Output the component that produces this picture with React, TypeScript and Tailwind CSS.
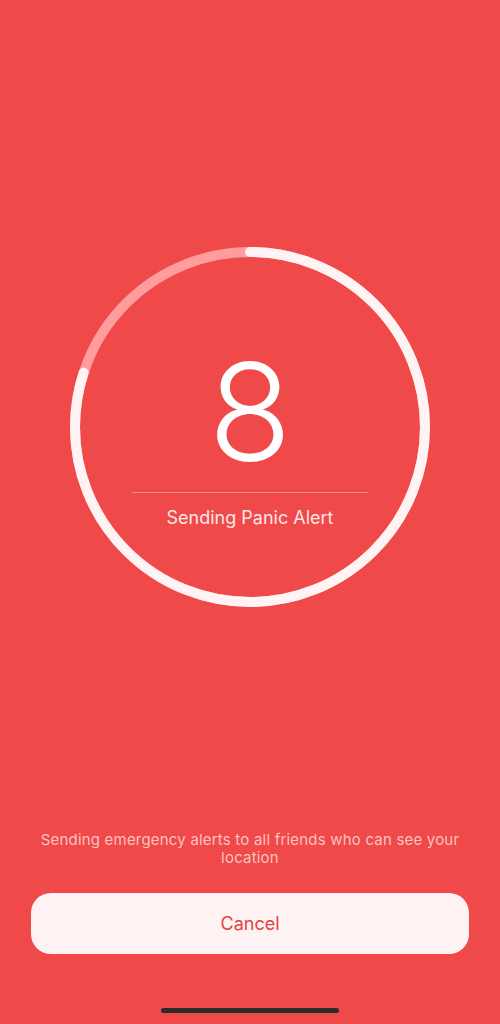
const RADIUS = 175;
const CIRC = 2 * Math.PI * RADIUS;

function CountdownRing({ count, total }: { count: number; total: number }) {
    const progress = count / total;
    return (
        <div className="relative mx-auto h-[360px] w-[360px]">
            <svg className="absolute inset-0" width="360" height="360" viewBox="0 0 360 360">
                <circle cx="180" cy="180" r={RADIUS} fill="none" stroke="#ff9c9c" strokeWidth="10" />
                <circle
                    cx="180"
                    cy="180"
                    r={RADIUS}
                    fill="none"
                    stroke="#fff3f3"
                    strokeWidth="10"
                    strokeLinecap="round"
                    strokeDasharray={`${CIRC * progress} ${CIRC}`}
                    transform="rotate(-90 180 180)"
                />
            </svg>
            <div className="relative flex flex-col items-center pt-[97px]">
                <span className="text-[136px] font-light leading-none text-white">{count}</span>
                <div className="mt-3 h-px w-[236px] bg-[#f78a8a]" />
                <span className="mt-[13px] text-[18px] leading-6 text-[#ffe6e6]">Sending Panic Alert</span>
            </div>
        </div>
    );
}

export default function App() {
    return (
        <div
            className="flex h-[1024px] w-full flex-col bg-[#ef4949]"
            style={{ fontFamily: 'Inter, "Noto Sans", sans-serif' }}
        >
            <div className="pt-[247px]">
                <CountdownRing count={8} total={10} />
            </div>

            <div className="flex-1" />

            <p className="px-[38px] text-center text-[15px] leading-[18px] tracking-[0.2px] text-[#ffc2c2]">
                Sending emergency alerts to all friends who can see your location
            </p>

            <div className="px-[31px] pt-[26px]">
                <button className="flex h-[61px] w-full items-center justify-center rounded-[20px] bg-[#fff2f2] text-[18px] text-[#e04343]">
                    Cancel
                </button>
            </div>

            <div className="flex justify-center pt-[54px] pb-[11px]">
                <div className="h-[5px] w-[178px] rounded-full bg-[#2b2b2b]" />
            </div>
        </div>
    );
}
